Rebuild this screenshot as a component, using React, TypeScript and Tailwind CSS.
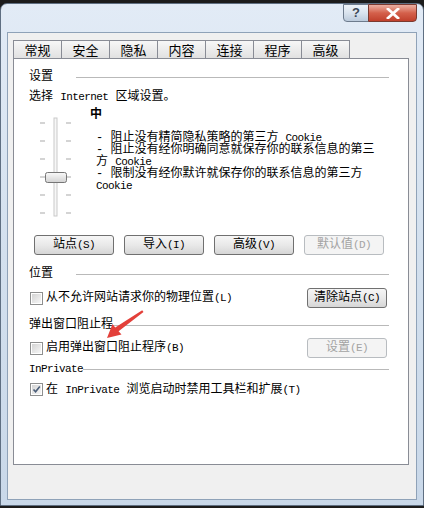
import React from "react";

// latin text in the dialog is half-width monospace
const M = ({ children }: { children: React.ReactNode }) => (
  <span className="font-['Liberation_Mono'] text-[11px] tracking-[-0.6px]">{children}</span>
);

const tabs = ["常规", "安全", "隐私", "内容", "连接", "程序", "高级"];

const GroupTitle = ({ children }: { children: React.ReactNode }) => (
  <div className="flex items-center h-[12px]">
    <div className="min-w-[47px] whitespace-nowrap">{children}</div>
    <div className="flex-1 h-px bg-[#b9b9b9]" />
  </div>
);

const Button = ({
  children,
  disabled = false,
}: {
  children: React.ReactNode;
  disabled?: boolean;
}) => (
  <div
    className={`w-[80px] h-[20px] flex items-center justify-center rounded-[3px] border ${
      disabled
        ? "border-[#b8bcc0] bg-[#f4f4f4] text-[#a3a3a3]"
        : "border-[#707070] bg-gradient-to-b from-[#f6f6f6] via-[#e9e9e9] to-[#d6d6d6] text-black"
    }`}
  >
    {children}
  </div>
);

const Checkbox = ({ checked = false }: { checked?: boolean }) => (
  <div className="w-[13px] h-[13px] border border-[#8e8f8f] bg-white p-[1px] shrink-0">
    <div className="w-full h-full bg-gradient-to-br from-[#d4d4d4] to-[#f7f7f7] relative">
      {checked && (
        <svg viewBox="0 0 9 9" className="absolute inset-0 w-full h-full">
          <path d="M1.5 4.5 L3.6 6.8 L7.8 1.6" fill="none" stroke="#4a5d78" strokeWidth="1.6" />
        </svg>
      )}
    </div>
  </div>
);

const Slider = () => (
  <svg width="61" height="117" viewBox="0 0 61 117" className="shrink-0">
    {[20, 38, 56, 74, 92, 110].map((y) => (
      <g key={y}>
        <line x1="11" y1={y} x2="16" y2={y} stroke="#a9a9a9" strokeWidth="1" />
        <line x1="37" y1={y} x2="42" y2={y} stroke="#a9a9a9" strokeWidth="1" />
      </g>
    ))}
    <rect x="25" y="15" width="3" height="98" fill="#f7f7f7" stroke="#c9c9c9" strokeWidth="1" />
    <defs>
      <linearGradient id="thumb" x1="0" y1="0" x2="0" y2="1">
        <stop offset="0" stopColor="#fafafa" />
        <stop offset="1" stopColor="#d2d2d2" />
      </linearGradient>
    </defs>
    <rect x="16.5" y="69.5" width="21" height="10" rx="2" fill="url(#thumb)" stroke="#767676" strokeWidth="1" />
  </svg>
);

export default function App() {
  return (
    <div className="relative w-[424px] h-[508px] bg-[#1c1c1c] pt-[3px] overflow-hidden font-['Liberation_Mono','Noto_Sans_CJK_SC',monospace] text-[12px] leading-[12px] text-black">
      <div className="h-[503px] rounded-t-[7px] border border-[#5f6f82] bg-gradient-to-b from-[#e2ebf6] via-[#d3e0ee] to-[#c9d8e9] px-[6px] flex flex-col">
        {/* title bar */}
        <div className="h-[28px] flex justify-end items-start">
          <div className="flex h-[18px]">
            <div className="w-[26px] h-full rounded-bl-[4px] border border-[#6d7b8d] bg-gradient-to-b from-[#eef3f8] via-[#d9e3ee] to-[#bccbdc] flex items-center justify-center text-[#3d4856] font-['Liberation_Sans'] font-bold text-[13px]">
              ?
            </div>
            <div className="w-[49px] h-full -ml-px rounded-br-[4px] border border-[#7a3a30] bg-gradient-to-b from-[#eab0a3] via-[#d4604b] to-[#c0402c] flex items-center justify-center">
              <svg width="14" height="11" viewBox="0 0 14 11">
                <path d="M2 1 L12 10 M12 1 L2 10" stroke="#ffffff" strokeWidth="2.8" strokeLinecap="square" />
              </svg>
            </div>
          </div>
        </div>

        {/* client area */}
        <div className="flex-1 mb-[5px] border border-[#8fa2b8] bg-[#f0f0f0] pl-[5px] pt-[7px]">
          <div className="flex h-[18px]">
            {tabs.map((t) => (
              <div
                key={t}
                className="w-[49px] -mr-px h-full border border-b-0 border-[#898c95] bg-gradient-to-b from-[#f7f7f7] to-[#e1e1e1] flex items-center justify-center text-[13px] leading-[13px] font-['Noto_Sans_CJK_SC',sans-serif]"
              >
                {t}
              </div>
            ))}
          </div>

          <div className="w-[396px] h-[407px] border border-[#898c95] bg-white pl-[15px] pr-[19px]">
            <div className="mt-[12px]">
              <GroupTitle>设置</GroupTitle>
            </div>
            <div className="mt-[8px] h-[12px]">
              选择 <M>Internet</M> 区域设置。
            </div>

            <div className="flex h-[117px]">
              <Slider />
              <div>
                <div className="mt-[6px] h-[12px] font-bold">中</div>
                <div className="mt-[11px] pl-[6px] whitespace-nowrap">
                  <div>- 阻止没有精简隐私策略的第三方 <M>Cookie</M></div>
                  <div>- 阻止没有经你明确同意就保存你的联系信息的第三</div>
                  <div>方 <M>Cookie</M></div>
                  <div>- 限制没有经你默许就保存你的联系信息的第三方</div>
                  <div><M>Cookie</M></div>
                </div>
              </div>
            </div>

            <div className="mt-[15px] ml-[5px] flex gap-[10px]">
              <Button>
                站点<M>(S)</M>
              </Button>
              <Button>
                导入<M>(I)</M>
              </Button>
              <Button>
                高级<M>(V)</M>
              </Button>
              <Button disabled>
                默认值<M>(D)</M>
              </Button>
            </div>

            <div className="mt-[13px]">
              <GroupTitle>位置</GroupTitle>
            </div>
            <div className="mt-[8px] h-[20px] flex items-center">
              <div className="ml-[1px]">
                <Checkbox />
              </div>
              <div className="ml-[3px] flex-1">
                从不允许网站请求你的物理位置<M>(L)</M>
              </div>
              <div className="mr-[2px]">
                <Button>
                  清除站点<M>(C)</M>
                </Button>
              </div>
            </div>

            <div className="mt-[11px]">
              <GroupTitle>弹出窗口阻止程</GroupTitle>
            </div>
            <div className="mt-[7px] h-[20px] flex items-center">
              <div className="ml-[1px]">
                <Checkbox />
              </div>
              <div className="ml-[3px] flex-1">
                启用弹出窗口阻止程序<M>(B)</M>
              </div>
              <div className="mr-[2px]">
                <Button disabled>
                  设置<M>(E)</M>
                </Button>
              </div>
            </div>

            <div className="mt-[5px]">
              <GroupTitle>
                <M>InPrivate</M>
              </GroupTitle>
            </div>
            <div className="mt-[8px] flex items-center">
              <div className="ml-[1px]">
                <Checkbox checked />
              </div>
              <div className="ml-[3px]">
                在 <M>InPrivate</M> 浏览启动时禁用工具栏和扩展<M>(T)</M>
              </div>
            </div>
          </div>
        </div>
      </div>

      {/* red annotation arrow */}
      <svg className="absolute left-0 top-0 pointer-events-none" width="424" height="508" viewBox="0 0 424 508">
        <polygon
          points="107,338 121.5,334.5 118.6,331.2 143.5,312 142.2,310.3 115.2,327.5 112.5,324"
          fill="#e3403a"
        />
      </svg>
    </div>
  );
}
